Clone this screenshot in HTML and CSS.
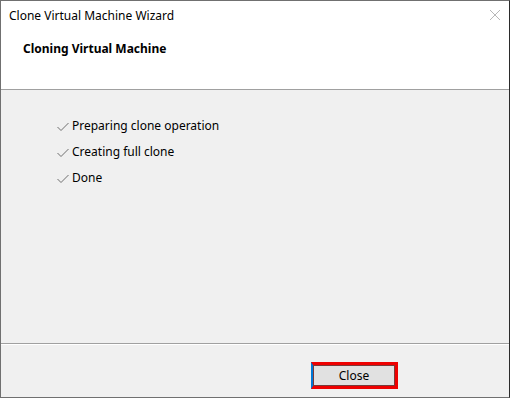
FILE: index.html
```html
<!DOCTYPE html>
<html lang="en">
<head>
    <meta charset="UTF-8">
    <title>Clone Virtual Machine Wizard</title>
    <link rel="stylesheet" href="styles.css">
</head>
<body>
    <div class="window">
        <div class="titlebar">
            <span class="title">Clone Virtual Machine Wizard</span>
            <svg class="close-x" width="12" height="12" viewBox="0 0 12 12">
                <path d="M1 1 L11 11 M11 1 L1 11" stroke="#b8b8b8" stroke-width="1" fill="none"/>
            </svg>
        </div>
        <div class="header">
            <h1>Cloning Virtual Machine</h1>
        </div>
        <div class="content">
            <ul class="steps">
                <li><span class="check"><svg width="12" height="10" viewBox="0 0 12 10"><path d="M0.5 5 L4 8.5 L11.5 1" stroke="#6e6e6e" stroke-width="1" fill="none"/></svg></span>Preparing clone operation</li>
                <li><span class="check"><svg width="12" height="10" viewBox="0 0 12 10"><path d="M0.5 5 L4 8.5 L11.5 1" stroke="#6e6e6e" stroke-width="1" fill="none"/></svg></span>Creating full clone</li>
                <li><span class="check"><svg width="12" height="10" viewBox="0 0 12 10"><path d="M0.5 5 L4 8.5 L11.5 1" stroke="#6e6e6e" stroke-width="1" fill="none"/></svg></span>Done</li>
            </ul>
        </div>
        <div class="footer">
            <button class="btn">Close</button>
        </div>
    </div>
</body>
</html>
```

FILE: styles.css
```css
html, body {
    margin: 0;
    padding: 0;
    background-color: #f0f0f0;
}
body {
    font-family: 'Noto Sans', 'Open Sans', sans-serif;
    font-size: 12px;
    color: #000;
}
.window {
    width: 508px;
    height: 396px;
    border: 1px solid #707070;
    border-right-color: #2b2b2b;
    display: flex;
    flex-direction: column;
    background-color: #f0f0f0;
}
.titlebar {
    height: 31px;
    background-color: white;
    display: flex;
    align-items: center;
    justify-content: space-between;
    padding: 0 8px 0 8px;
}
.title {
    font-size: 12px;
    line-height: 14px;
    margin-top: -1px;
}
.close-x {
    margin-top: -3px;
}
.header {
    height: 57px;
    background-color: white;
    border-bottom: 1px solid #a0a0a0;
    padding-left: 22px;
}
.header h1 {
    margin: 0;
    padding-top: 10px;
    font-size: 12px;
    font-weight: 700;
    line-height: 14px;
}
.content {
    flex: 1;
    border-bottom: 1px solid #a0a0a0;
}
.steps {
    list-style: none;
    margin: 0;
    padding: 23px 0 0 56px;
}
.steps li {
    display: flex;
    align-items: center;
    height: 26px;
    line-height: 14px;
}
.check {
    width: 15px;
    display: flex;
    margin-top: 2px;
}
.footer {
    height: 53px;
    border-top: 1px solid white;
    display: flex;
    justify-content: flex-end;
    padding-right: 111px;
    box-sizing: border-box;
}
.btn {
    margin-top: 17px;
    width: 87px;
    height: 27px;
    border: 3px solid #ee0000;
    border-left: 2px solid #0078d7;
    box-shadow: inset 0 0 0 1px #7a3a3a;
    background-color: #e1e1e1;
    font-family: 'Noto Sans', 'Open Sans', sans-serif;
    font-size: 12px;
    color: #000;
    padding: 0;
}
```
